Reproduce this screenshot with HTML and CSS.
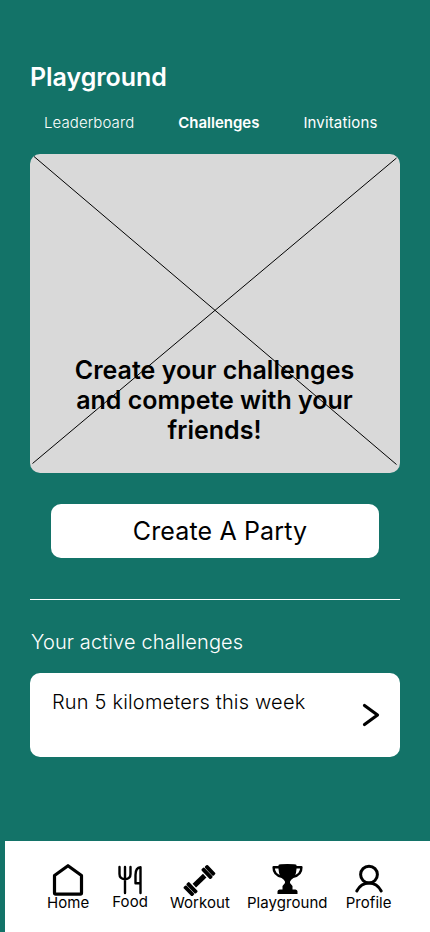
FILE: index.html
```html
<!DOCTYPE html>
<html lang="en">
<head>
<meta charset="utf-8">
<title>Playground</title>
<link rel="stylesheet" href="styles.css">
</head>
<body>
<div class="app">
  <main class="content">
    <h1 class="title">Playground</h1>
    <nav class="tabs">
      <a class="tab tab-light">Leaderboard</a>
      <a class="tab tab-active">Challenges</a>
      <a class="tab">Invitations</a>
    </nav>
    <section class="hero">
      <svg class="hero-cross" viewBox="0 0 370 319" fill="none" stroke="#000" stroke-width="1">
        <path d="M4 2.500 366.500 310.500M366.500 4 2.500 309.500"/>
      </svg>
      <p class="hero-text">Create your challenges<br>and compete with your<br>friends!</p>
    </section>
    <button class="create">Create A Party</button>
    <hr class="divider">
    <h2 class="subtitle">Your active challenges</h2>
    <article class="challenge">
      <span class="challenge-name">Run 5 kilometers this week</span>
      <svg class="chevron" viewBox="0 0 18 24" fill="none" stroke="#000" stroke-width="3.200" stroke-linecap="round" stroke-linejoin="round"><path d="M2.500 2.500 15.500 12 2.500 21.500"/></svg>
    </article>
  </main>
  <nav class="bar">
    <a class="item home">
      <svg class="icon" viewBox="0 0 34 34" fill="none" stroke="#000" stroke-width="3.200" stroke-linejoin="round"><path d="M17 3.700 30.500 13.500v17.500q0 1.200-1.200 1.200H4.700q-1.200 0-1.200-1.200V13.500Z"/></svg>
      <span>Home</span>
    </a>
    <a class="item food">
      <svg class="icon" viewBox="0 0 34 34" fill="none" stroke="#000" stroke-width="2.400" stroke-linecap="round" stroke-linejoin="round"><path d="M6.500 5v7q0 4.800 5.500 5.300 5.500-.5 5.500-5.300V5M12 5v26M27.500 31V5.200Q22.500 5.500 22.500 13v8.300h4.500"/></svg>
      <span>Food</span>
    </a>
    <a class="item workout">
      <svg class="icon" viewBox="0 0 34 34"><g transform="translate(16.500 18.600) rotate(-44)"><path d="M-7.200 -2.500H7.200V2.500H-7.200Z"/><rect x="-12.400" y="-6.700" width="3.900" height="13.400" rx="1.200"/><rect x="-16.700" y="-6.300" width="3.900" height="12.600" rx="1.200"/><rect x="8.500" y="-6.700" width="3.900" height="13.400" rx="1.200"/><rect x="12.800" y="-6.300" width="3.900" height="12.600" rx="1.200"/></g></svg>
      <span>Workout</span>
    </a>
    <a class="item playground">
      <svg class="icon" viewBox="0 0 34 34"><path d="M8.500 3Q9 2 17.500 2T26.500 3V7Q26 15 21.500 17.500q-2 1.500-1.500 3.500l2.500 3v3.500h3q2 .5 2 2V32h-20v-2.500q0-1.500 2-2h3V24l2.500-3q.5-2-1.500-3.500Q9 15 8.500 7Z"/><path d="M9 5.300H3.600Q3.400 13 12 14.800M26 5.300h5.400Q31.600 13 23 14.800" fill="none" stroke="#000" stroke-width="2.400" stroke-linejoin="round"/></svg>
      <span>Playground</span>
    </a>
    <a class="item profile">
      <svg class="icon" viewBox="0 0 34 34" fill="none" stroke="#000" stroke-width="3" stroke-linecap="round"><circle cx="17" cy="12.600" r="8.400"/><path d="M4.800 29Q9 21 17 21T29.200 29"/></svg>
      <span>Profile</span>
    </a>
  </nav>
</div>
</body>
</html>
```
FILE: styles.css
```css
* { box-sizing: border-box; }
body { margin: 0; background: #137368; font-family: Inter, "Liberation Sans", sans-serif; }
.app { width: 430px; height: 932px; display: flex; flex-direction: column; overflow: hidden; }
.content { flex: 1; padding: 62px 30px 0; display: flex; flex-direction: column; }
.title { margin: 0; font-size: 25px; line-height: 30px; font-weight: 600; letter-spacing: -0.05px; color: #fff; }
.tabs { display: flex; justify-content: space-between; padding: 0 22.500px 0 14px; margin-top: 22px; color: #fff; font-size: 15px; line-height: 18px; font-weight: 400; letter-spacing: 0.15px; }
.tab-light { font-weight: 300; letter-spacing: 0.09px; }
.tab-active { font-weight: 600; letter-spacing: 0; }
.hero { height: 319px; margin-top: 22px; border-radius: 10px; background: #d9d9d9; display: grid; }
.hero-cross, .hero-text { grid-area: 1 / 1; }
.hero-cross { width: 370px; height: 319px; }
.hero-text { margin: 201px 1px 0 0; text-align: center; font-size: 25px; line-height: 30px; font-weight: 600; }
.create { margin: 31px 21px 0; height: 54px; padding: 0 0 0 10px; border: 0; border-radius: 10px; background: #fff; color: #000; font: 400 25px/30px Inter, "Liberation Sans", sans-serif; letter-spacing: 0.14px; }
.divider { width: 370px; height: 1px; margin: 41px 0 0; border: 0; background: #fff; }
.subtitle { margin: 30px 0 0 1px; color: #fff; font-size: 20px; line-height: 24px; font-weight: 300; letter-spacing: 0.12px; }
.challenge { height: 84px; margin-top: 19px; padding: 17px 20px 0 22px; border-radius: 10px; background: #fff; display: flex; justify-content: space-between; font-size: 20px; line-height: 24px; font-weight: 300; letter-spacing: 0.18px; }
.chevron { width: 18px; height: 24px; margin-top: 13px; }
.bar { height: 91px; margin-left: 5px; padding: 21px 0 0 42px; background: #fff; display: flex; font-size: 15px; line-height: 18px; font-weight: 400; letter-spacing: 0.06px; }
.item { display: flex; flex-direction: column; align-items: center; }
.icon { width: 34px; height: 34px; margin-bottom: -2px; }
.food { margin-left: 23px; }
.food .icon { margin-bottom: -3px; }
.workout { margin-left: 22px; }
.playground { margin-left: 17px; }
.profile { margin-left: 18px; }
```
